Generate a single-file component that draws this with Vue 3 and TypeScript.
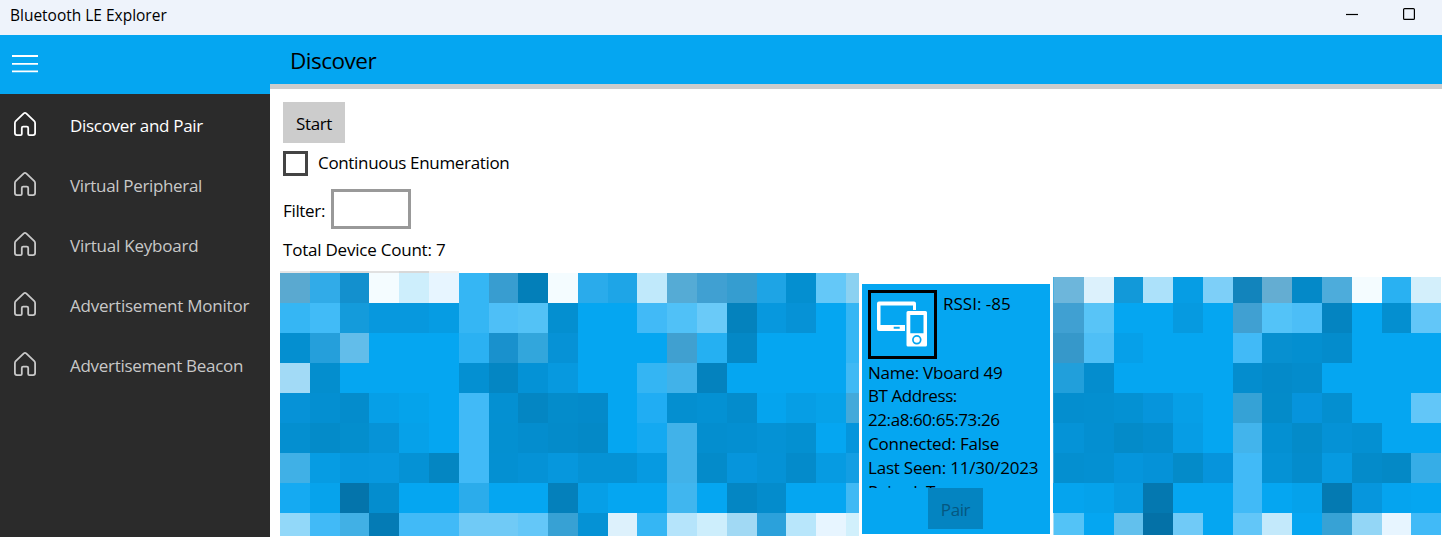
<script setup lang="ts">
interface Mosaic {
  name: string
  rows: string[]
}

const navItems: string[] = [
  'Discover and Pair',
  'Virtual Peripheral',
  'Virtual Keyboard',
  'Advertisement Monitor',
  'Advertisement Beacon',
]

const details: { text: string; key: string }[] = [
  { text: 'Name: Vboard 49', key: 'name' },
  { text: 'BT Address:', key: 'label' },
  { text: '22:a8:60:65:73:26', key: 'address' },
  { text: 'Connected: False', key: 'connected' },
  { text: 'Last Seen: 11/30/2023', key: 'seen' },
  { text: 'Paired: True', key: 'paired' },
]

const left: Mosaic = {
  name: 'left',
  rows: [
    '5aa9d0 31abe8 1390ce f4fcff cdeefc e7f5ff 35b6f4 389dd0 037fb9 f4fcff 2aabeb 1ea5e7 c0e9fb 55abd5 40a0d2 359dd0 1ea4e5 048fd0 64c8f8 8bd1f1',
    '35b6f4 41bbf7 149bdb 0798de 0798de 069ce3 35b6f4 4ebff7 53c2f6 048fd0 05a6f1 05a6f1 41baf7 50c1f7 6acaf8 0482bd 0798de 0692d6 05a6f1 35b6f4',
    '048fd0 259fdb 62bdea 05a6f1 05a6f1 05a6f1 2bb1f2 1991cd 32a6dc 0692d6 05a6f1 05a6f1 05a6f1 40a0d0 25b0f2 0488c6 05a6f1 05a6f1 05a6f1 35b6f4',
    'a2daf6 048ece 05a6f1 05a6f1 05a6f1 05a6f1 0490d2 0486c3 0492d6 0799df 05a6f1 05a6f1 34b5f3 41b2e9 0482be 05a6f1 05a6f1 05a6f1 05a6f1 40b9f4',
    '0692d7 048fd1 048ccc 069fe7 05a3eb 05a6f1 41baf7 0490d2 0486c3 048ccb 048aca 05a6f1 20adf3 048fd0 0491d3 048ccc 05a4ee 069ee5 06a2e9 43a9da',
    '048fd0 048bc9 048ecd 0693d7 06a1e9 05a6f1 41baf7 0490d1 048dce 048bca 0489c7 05a6f1 14a9f1 41b2e9 048ecf 048fd1 0592d5 0490d1 05a6f1 0595dc',
    '40b0e6 069ce3 0697de 0798df 0592d5 0486c2 41baf7 0490d2 0592d6 0697dd 0592d5 0592d5 069ae1 41b2e9 048bca 0695dc 0592d6 048bcb 069be2 139ee3',
    '15aaf2 06a3ec 0474ab 048dce 05a6f1 05a6f1 2baceb 05a6f1 05a6f1 0480bb 069fe7 05a6f1 05a6f1 40b6ef 05a6f1 0486c3 048ccc 05a6f1 05a6f1 40b9f4',
    '92d8f9 41baf7 41b0e5 047bb5 41baf7 41baf7 70caf6 70caf6 64c7f8 37a1d4 0592d5 ddf1fc 35b6f4 b5e4fb cdeefc a1d9f4 2ba1db b8e6fb e7f5ff d1f0fc',
  ],
}

const right: Mosaic = {
  name: 'right',
  rows: [
    '48afe0 6db6db dcf1fc 1299d9 ace1fa 069de4 7dcff8 1284bc 64add2 0489c8 4dacdb f4fcff 29b1f2 d3effb',
    '40a0d2 40a0d2 58c4f7 05a6f1 05a6f1 069ae0 05a6f1 40a0d2 53c3f8 4cbef7 0484c1 05a6f1 048fd0 62c6f8',
    '3698ca 3698ca 4fbff6 06a0e9 05a6f1 05a6f1 05a6f1 41baf7 0790d0 048fd0 048ccc 05a6f1 05a6f1 05a6f1',
    '219fdb 219fdb 048dce 05a6f1 05a6f1 05a6f1 05a6f1 048dce 048ac9 048ccc 05a6f1 05a6f1 05a6f1 05a6f1',
    '1d97d0 048ecf 048fd0 0491d3 0695dc 069fe7 05a6f1 35a2d6 048bc9 0694dc 048fd0 05a6f1 05a6f1 62c6f8',
    '35a7df 0593d7 048fd1 048bc9 048dce 069de5 05a6f1 42b4ec 0490d2 048bc9 0592d6 0490d2 05a6f1 05a6f1',
    '43a8dc 048fd0 0490d2 0595dc 0592d8 048bc9 0694dc 41baf7 0592d5 048ccc 069ae1 048bca 0489c6 36ade7',
    '05a4ee 05a4ee 05a2eb 069be2 0478b0 05a6f1 05a6f1 41baf7 05a6f1 05a2eb 047ab2 0696dd 05a4ef 05a6f1',
    'a4dcf4 53c3f7 05a6f1 62c0ed 0471a7 70caf7 05a6f1 62c6f8 c3e9fb 05a6f1 37a2d5 93d6f6 e7f5ff 41baf7',
  ],
}

const tiles = (m: Mosaic): string[] => m.rows.flatMap((r) => r.split(' ').map((c) => '#' + c))
const stripTiles: string[] = ['#e6e6e6', '#d0d0d0', '#d8d8d8', '#e1e1e1', '#d8d8d8', '#f2f2f2']
</script>

<template>
  <div class="window">
    <header class="titlebar">
      <span class="app-title">Bluetooth LE Explorer</span>
      <svg class="controls" width="80" height="16" viewBox="0 0 80 16">
        <path d="M6 7.5H18" stroke="#000" stroke-width="1.2" />
        <rect x="63.6" y="1.6" width="10.8" height="10.8" rx="1" fill="none" stroke="#000" stroke-width="1.2" />
      </svg>
    </header>
    <div class="body">
      <aside class="pane">
        <div class="menu">
          <svg width="26" height="20" viewBox="0 0 26 20" fill="none" stroke="#fff" stroke-width="1.8">
            <path d="M0 2H26M0 9.8H26M0 17.4H26" />
          </svg>
        </div>
        <nav>
          <div v-for="(item, i) in navItems" :key="item" class="nav-item" :class="{ active: i === 0 }">
            <svg class="home" width="24" height="26" viewBox="0 0 24 26" fill="none" stroke="currentColor" stroke-width="1.8" stroke-linejoin="round">
              <path d="M1.9 12.2Q1.9 11 2.7 10.2L10.8 2.4Q12 1.4 13.2 2.4L21.3 10.2Q22.1 11 22.1 12.2V22.1Q22.1 24.1 20.1 24.1H16.4Q15.2 24.1 15.2 22.9V17Q15.2 15.6 13.8 15.6H10.2Q8.8 15.6 8.8 17V22.9Q8.8 24.1 7.6 24.1H3.9Q1.9 24.1 1.9 22.1Z" />
            </svg>
            <span class="nav-text" :class="'nav-' + i">{{ item }}</span>
          </div>
        </nav>
      </aside>
      <main>
        <div class="page-head"><span>Discover</span></div>
        <section class="form">
          <button class="start">Start</button>
          <label class="check"><i></i><span>Continuous Enumeration</span></label>
          <div class="filter"><span>Filter:</span><input type="text" aria-label="Filter" /></div>
          <div class="count">Total Device Count: 7</div>
        </section>
        <section class="devices">
          <div class="group-left">
            <div class="strip"><i v-for="(c, i) in stripTiles" :key="i" :style="{ background: c }"></i></div>
            <div class="mosaic left"><i v-for="(c, i) in tiles(left)" :key="i" :style="{ background: c }"></i></div>
          </div>
          <article class="card">
            <div class="card-top">
              <div class="thumb">
                <svg width="63" height="63" viewBox="0 0 63 63">
                  <path fill="#fff" fill-rule="evenodd" d="M8 8.500H43Q45 8.500 45 10.500V17H42V12.500H9.500V32H34V38H8Q6 38 6 36V10.500Q6 8.500 8 8.500ZM22.700 33.700V35.700H28.700V33.700Z" />
                  <path fill="#fff" fill-rule="evenodd" d="M37 18H54.500Q56 18 56 19.500V52Q56 53.500 54.500 53.500H37Q35.500 53.500 35.500 52V19.500Q35.500 18 37 18ZM39.300 22V40.300H52.500V22Z" />
                  <circle cx="45.8" cy="46.8" r="3.9" fill="#fff" stroke="#05a6f1" stroke-width="1.7" />
                </svg>
              </div>
              <span class="rssi">RSSI: -85</span>
            </div>
            <div class="details">
              <div v-for="d in details" :key="d.key"><span :class="'d-' + d.key">{{ d.text }}</span></div>
            </div>
            <button class="pair" disabled>Pair</button>
          </article>
          <div class="mosaic right"><i v-for="(c, i) in tiles(right)" :key="i" :style="{ background: c }"></i></div>
        </section>
      </main>
    </div>
  </div>
</template>

<style>
body { margin: 0; overflow: hidden; }
</style>

<style scoped>
* { box-sizing: border-box; }
.window {
  width: 1442px; height: 537px; overflow: hidden; background: #fff; color: #000;
  font: 17px/24px "Open Sans", "Noto Sans", sans-serif; white-space: nowrap;
  display: flex; flex-direction: column;
}
.titlebar {
  height: 35px; flex: none; background: #eef3fb; display: flex; justify-content: space-between;
  padding: 3px 22px 0 10px; font-size: 15.5px; line-height: 25px;
}
.app-title { letter-spacing: -0.01px; }
.controls { margin-top: 4px; }
.body { flex: 1; display: flex; min-height: 0; }
.pane { width: 270px; flex: none; background: #2b2b2b; }
.menu { height: 59px; background: #05a6f1; padding: 19px 12px; }
.menu svg { display: block; }
.nav-item { height: 60px; display: flex; padding: 17px 13px 0; color: #c8c8c8; }
.nav-item.active { color: #fff; }
.home { flex: none; margin-right: 33px; }
.nav-text { line-height: 29px; letter-spacing: -0.3px; }
.nav-1 { letter-spacing: -0.34px; }
.nav-2, .nav-3 { letter-spacing: -0.22px; }
main { flex: 1; min-width: 0; display: flex; flex-direction: column; }
.page-head {
  height: 54px; flex: none; background: #05a6f1; border-bottom: 5px solid #ccc;
  padding: 9px 20px 0; font-size: 22.5px; line-height: 34px; letter-spacing: -0.5px;
}
.form { height: 182px; flex: none; padding: 13px 13px 0; letter-spacing: -0.33px; }
button { border: 0; padding: 0; font: inherit; display: block; letter-spacing: -0.4px; }
.start { width: 62px; height: 41px; background: #ccc; color: #000; padding-top: 2px; }
.check { display: flex; align-items: center; height: 24px; margin-top: 8px; gap: 10px; }
.check i { width: 25px; height: 25px; border: 3px solid #444; }
.filter { display: flex; align-items: center; height: 40px; margin-top: 14px; }
.filter span { width: 48px; padding-top: 3px; }
.filter input { width: 80px; height: 40px; border: 3px solid #999; background: #fff; padding: 0; }
.count { margin-top: 9px; letter-spacing: -0.22px; }
.devices { flex: 1; display: flex; min-height: 0; padding-left: 10px; }
.group-left { width: 579px; flex: none; }
.strip { height: 2px; display: grid; grid-template-columns: 30px 30px 29px 30px 30px 30px; }
.mosaic { display: grid; }
.left {
  grid-template-columns: 30px 30px 29px 30px 30px 30px 30px 29px 30px 30px 30px 29px 30px 30px 30px 30px 29px 30px 30px 13px;
  grid-template-rows: repeat(8, 30px) 23px;
}
.right {
  margin: 6px 0 0 3px; align-self: flex-start;
  grid-template-columns: 1px 30px 30px 29px 30px 30px 30px 29px 30px 30px 30px 30px 29px 30px;
  grid-template-rows: 26px repeat(7, 30px) 22px;
}
.card {
  width: 188px; height: 250px; flex: none; margin: 13px 0 0 3px; padding: 6px 6px 0;
  background: #05a6f1; display: flex; flex-direction: column;
}
.card-top { display: flex; gap: 6px; height: 71px; flex: none; }
.thumb { width: 69px; height: 69px; border: 3px solid #000; }
.thumb svg { display: block; }
.rssi { padding-top: 2px; }
.details { height: 127px; overflow: hidden; flex: none; letter-spacing: -0.22px; }
.details div { height: 24px; }
.details div:first-child { height: 23px; }
.d-label, .d-address { letter-spacing: -0.42px; }
.pair { width: 55px; height: 41px; margin-left: 60px; background: #0484c1; color: #055780; padding-top: 2px; }
</style>
